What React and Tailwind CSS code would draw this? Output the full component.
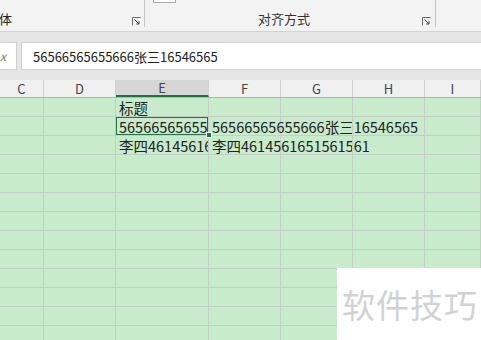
import React from "react";

const cols = [
  { key: "C", w: "w-[44px]" },
  { key: "D", w: "w-[72px]" },
  { key: "E", w: "w-[93px]" },
  { key: "F", w: "w-[72px]" },
  { key: "G", w: "w-[72px]" },
  { key: "H", w: "w-[72px]" },
  { key: "I", w: "flex-1" },
];

const data = {
  "E0": "标题",
  "E1": "56566565655666张三16546565",
  "F1": "56566565655666张三16546565",
  "E2": "李四4614561651561561",
  "F2": "李四4614561651561561",
};

function Launcher() {
  return (
    <svg width="9" height="9" viewBox="0 0 9 9" className="block">
      <path d="M0.5 8.5 V0.5 H8.5" fill="none" stroke="#6b6b6b" strokeWidth="1" />
      <path d="M2.5 2.5 L7 7 M7 4.2 V7 H4.2" fill="none" stroke="#444" strokeWidth="1" />
    </svg>
  );
}

export default function App() {
  const rows = Array.from({ length: 13 }, (_, i) => i);
  return (
    <div
      className="relative w-[481px] h-[340px] overflow-hidden bg-[#e6e6e6] text-[#222]"
      style={{ fontFamily: '"Noto Sans CJK SC", "Noto Sans", sans-serif' }}
    >
      {/* Ribbon */}
      <div className="h-[32px] flex bg-[#f3f3f3] border-b border-[#d4d4d4]">
        <div className="w-[145px] flex items-end justify-between pb-[1px] pr-[3px] border-r border-[#c6c6c6] mb-[4px]">
          <span className="text-[13px] leading-none -ml-[1px] mb-[1px]">体</span>
          <Launcher />
        </div>
        <div className="w-[291px] flex flex-col border-r border-[#c6c6c6] mb-[4px]">
          <div className="ml-[8px] w-[23px] h-[3px] border border-t-0 border-[#a8a8a8] bg-white"></div>
          <div className="flex-1 flex items-end justify-between pb-[1px] pr-[4px]">
            <span className="text-[13px] leading-none ml-[113px] mb-[1px] text-[#333]">对齐方式</span>
            <Launcher />
          </div>
        </div>
        <div className="flex-1"></div>
      </div>

      {/* gap band */}
      <div className="h-[10px]"></div>

      {/* Formula bar */}
      <div className="h-[28px] flex gap-[4px]">
        <div className="w-[17px] bg-white border border-l-0 border-[#cfcfcf] flex items-center justify-end overflow-hidden">
          <span className="italic text-[12px] text-[#777] leading-none mr-[10px]">x</span>
        </div>
        <div className="flex-1 bg-white border border-r-0 border-[#cfcfcf] flex items-center pl-[11px]">
          <span className="text-[13px] leading-none whitespace-nowrap">56566565655666张三16546565</span>
        </div>
      </div>

      {/* gap band */}
      <div className="h-[10px]"></div>

      {/* Column headers */}
      <div className="h-[18px] flex bg-[#f0f0f0] border-b border-[#9fc29f]">
        {cols.map((c) => (
          <div
            key={c.key}
            className={`${c.w} shrink-0 flex items-center justify-center border-r border-[#d0d0d0] text-[13px] leading-none text-[#444] ${
              c.key === "E" ? "bg-[#d6d6d6] border-b-2 border-b-[#217346]" : ""
            }`}
          >
            {c.key}
          </div>
        ))}
      </div>

      {/* Grid */}
      <div className="relative bg-[#c7ebcb]">
        {rows.map((r) => (
          <div key={r} className="h-[19px] flex">
            {cols.map((c) => {
              const v = data[c.key + r];
              const clip = c.key === "E" && r > 0;
              return (
                <div
                  key={c.key}
                  className={`${c.w} shrink-0 relative border-r border-b border-[#c3cfc4] flex items-end pl-[3px] whitespace-nowrap text-[14.5px] leading-[18px] ${
                    clip ? "overflow-hidden" : "overflow-visible z-10"
                  }`}
                >
                  {v ? <span className="leading-[17px]">{v}</span> : null}
                  {c.key === "E" && r === 1 ? (
                    <div className="absolute -left-[1px] -top-[1px] w-[94px] h-[20px] border-2 border-[#217346] pointer-events-none"></div>
                  ) : null}
                </div>
              );
            })}
          </div>
        ))}
        {/* fill handle */}
        <div className="absolute left-[206px] top-[34px] w-[6px] h-[6px] bg-[#217346] border border-white z-20"></div>
      </div>

      {/* Watermark */}
      <div className="absolute left-[337px] top-[268px] w-[144px] h-[72px] bg-white z-30 flex items-center pl-[5px]">
        <span className="text-[33px] leading-none text-[#d2d2d2] tracking-[1px]">软件技巧</span>
      </div>
    </div>
  );
}
